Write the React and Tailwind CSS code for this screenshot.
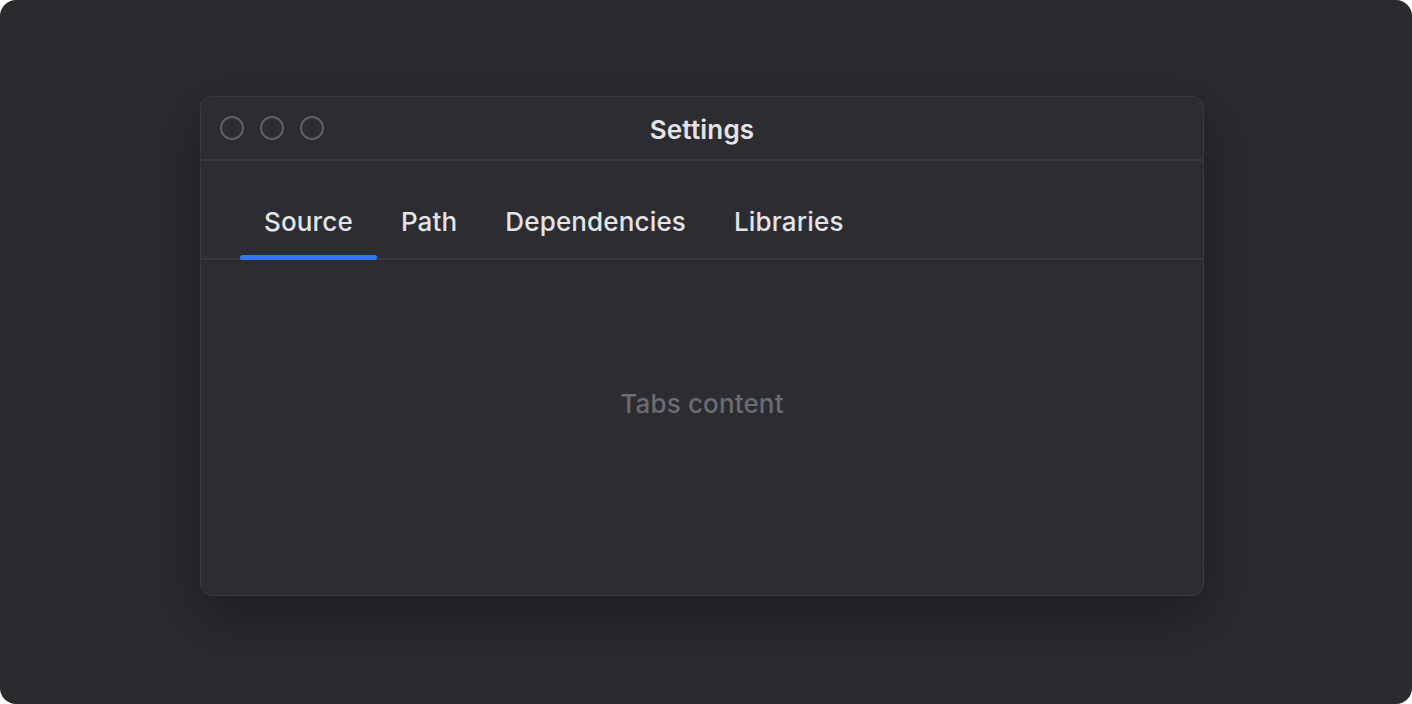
import { useState } from "react"

const tabs = ["Source", "Path", "Dependencies", "Libraries"]

function TrafficLights() {
  return (
    <div className="absolute left-[19px] top-[19px] flex gap-4">
      {[0, 1, 2].map((i) => (
        <span key={i} className="w-6 h-6 rounded-full border-2 border-[#606166]" />
      ))}
    </div>
  )
}

export default function App() {
  const [active, setActive] = useState("Source")

  return (
    <div
      className="w-[1412px] h-[704px] bg-white"
      style={{ fontFamily: "Inter, 'Noto Sans', sans-serif" }}
    >
      <div className="w-full h-full rounded-2xl bg-[#2a2b2f] pt-[96px] pl-[200px]">
        <div className="w-[1004px] h-[500px] rounded-xl bg-[#2c2d32] border border-[#3a3b40] shadow-[0_20px_60px_rgba(0,0,0,0.35)] flex flex-col overflow-hidden">
          <div className="relative h-[64px] shrink-0 border-b-2 border-[#38393e] flex items-center justify-center">
            <TrafficLights />
            <span className="text-[26px] font-semibold text-[#e4e4e7] tracking-[0.2px] pt-[2px]">Settings</span>
          </div>

          <div className="h-[99px] shrink-0 border-b-2 border-[#38393e] flex items-end px-[39px]">
            {tabs.map((tab) => (
              <button
                key={tab}
                onClick={() => setActive(tab)}
                className="relative h-full px-6 flex items-center pt-[24px] text-[26px] font-medium tracking-[0.15px] text-[#e4e4e7]"
              >
                {tab}
                {active === tab && (
                  <span className="absolute left-0 right-0 -bottom-[2px] h-[5px] rounded-full bg-[#3478f6]" />
                )}
              </button>
            ))}
          </div>

          <div className="flex-1 flex items-center justify-center pb-[48px]">
            <span className="text-[26px] font-medium tracking-[0.15px] text-[#6b6c72]">Tabs content</span>
          </div>
        </div>
      </div>
    </div>
  )
}
